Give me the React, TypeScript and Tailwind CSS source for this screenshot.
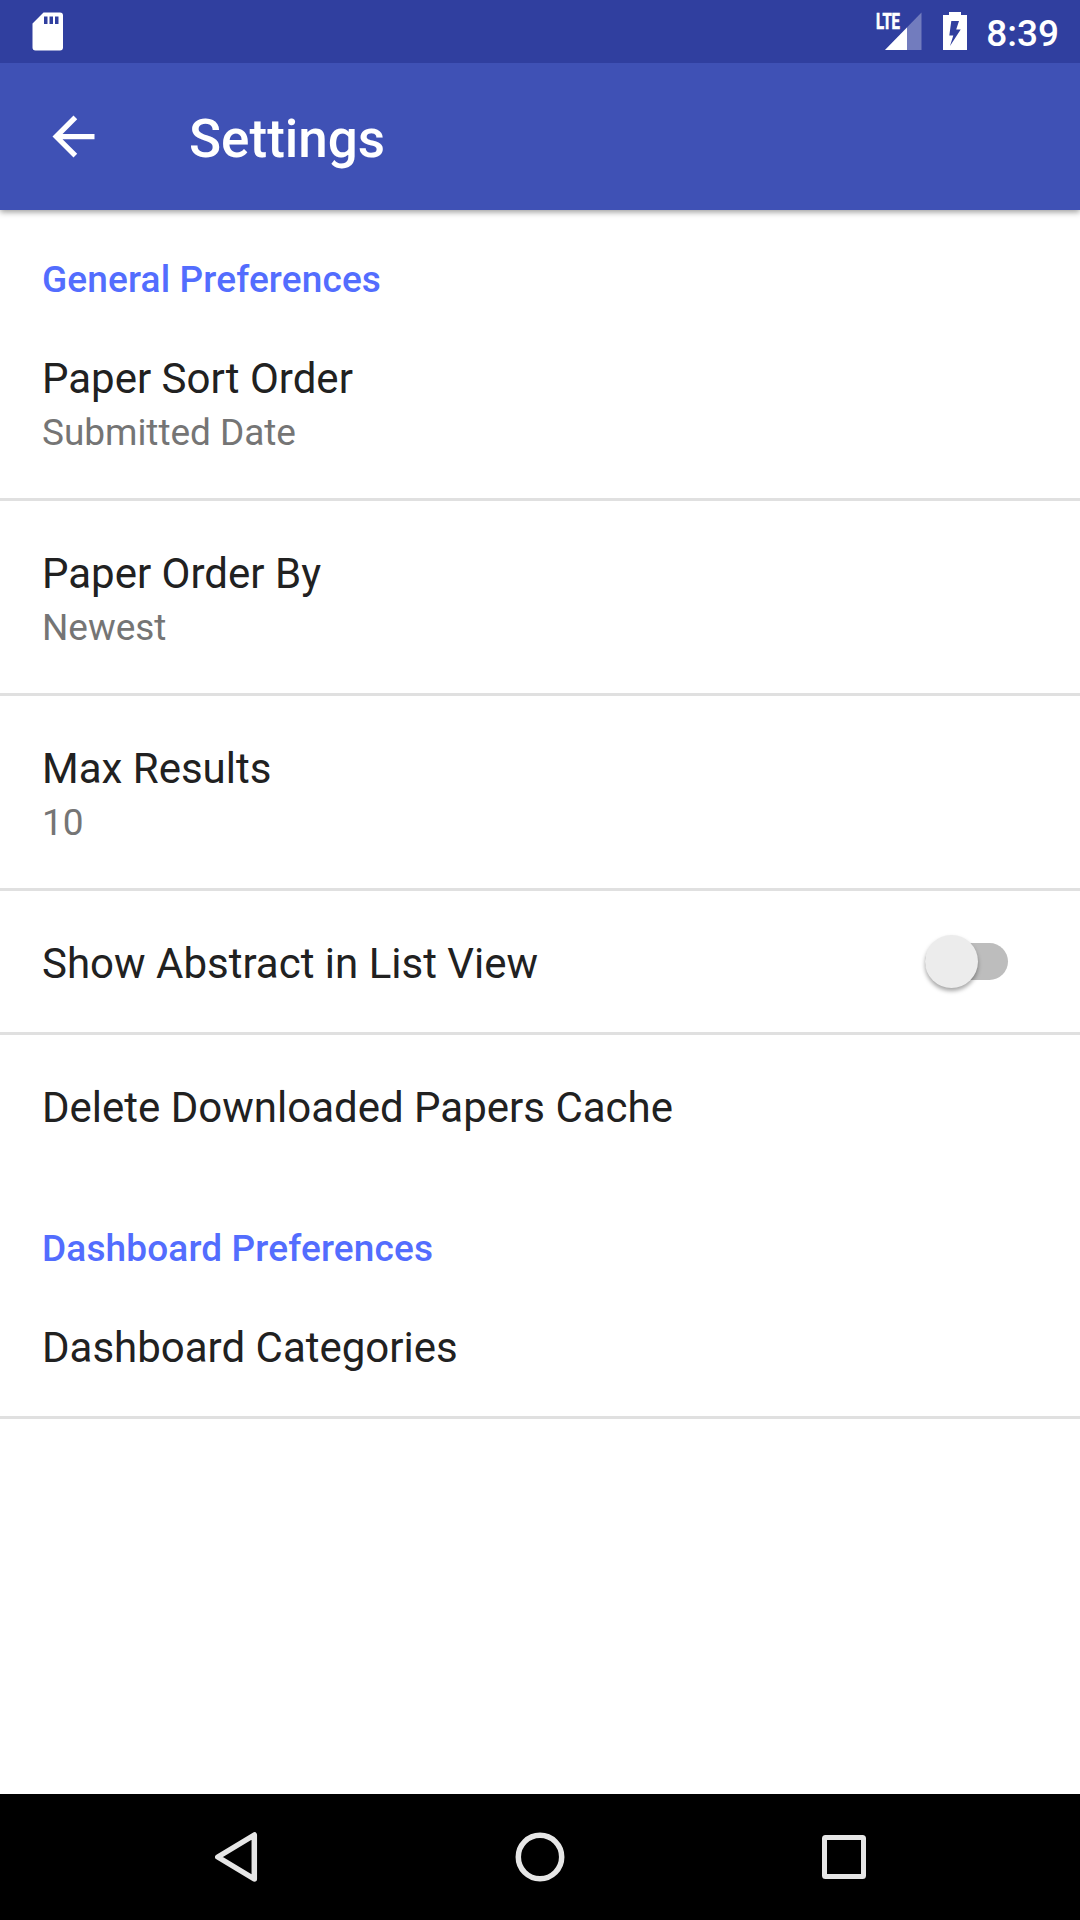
import React from "react";

function StatusBar() {
  return (
    <div className="relative z-10 flex h-[63px] items-center bg-[#303f9f] pl-8 pr-[21px]">
      <svg className="mr-auto h-[63px] w-8" viewBox="32 0 32 63">
        <path
          fillRule="evenodd"
          fill="#fff"
          d="M43.5 12.5H60q3 0 3 3V47.500q0 3-3 3H35.500q-3 0-3-3V23.500zM44 16.500v7.500h3.500v-7.500zM49.500 16.500v7.500h3.500v-7.500zM55 16.500v7.500h3.500v-7.500z"
        />
      </svg>
      <svg className="h-[63px] w-12" viewBox="876 0 48 63">
        <path d="M921.500 12.500V50H885z" fill="#fff" fillOpacity="0.32" />
        <path d="M907 27.500V50H885z" fill="#fff" />
        <text
          x="876"
          y="29.2"
          fill="#fff"
          stroke="#fff"
          strokeWidth="0.7"
          fontFamily="Roboto"
          fontWeight="700"
          fontSize="22.5"
          textLength="24"
          lengthAdjust="spacingAndGlyphs"
        >
          LTE
        </text>
      </svg>
      <svg className="ml-[19px] h-[63px] w-6" viewBox="943 0 24 63">
        <path
          fillRule="evenodd"
          fill="#fff"
          d="M949 12h12v3h6v35h-24V15h6zM951.300 21l-2 14.500h4L950 46 960.700 29.500h-4.500L959 21z"
        />
      </svg>
      <span className="ml-[19px] pt-[5px] text-[37px] font-medium leading-[44px] text-white">8:39</span>
    </div>
  );
}

function AppBar() {
  return (
    <header className="relative flex h-[147px] items-center bg-[#3f51b5] pl-[42px] shadow-[0_2px_6px_rgba(0,0,0,0.4)]">
      <svg className="size-[63px]" viewBox="0 0 24 24" fill="#fff">
        <path d="M20 11H7.830l5.590-5.590L12 4l-8 8 8 8 1.410-1.410L7.830 13H20v-2z" />
      </svg>
      <h1 className="ml-[84px] pt-[4px] text-[53px] font-medium leading-[62px] text-white">Settings</h1>
    </header>
  );
}

function SectionTitle({ children }: { children: React.ReactNode }) {
  return (
    <h2 className="h-24 px-[42px] pt-[45px] text-[37px] font-medium leading-[50px] tracking-[0.14px] text-[#536dfe]">
      {children}
    </h2>
  );
}

type RowProps = { title: string; summary?: string; divider?: boolean; children?: React.ReactNode };

function Row({ title, summary, divider = true, children }: RowProps) {
  return (
    <div
      className={`flex justify-between border-b-[3px] px-[42px] pt-[45px] ${
        summary ? "h-[195px]" : "h-36"
      } ${divider ? "border-[#e0e0e0]" : "border-transparent"}`}
    >
      <div>
        <div className="text-[42px] leading-[56px] text-[#212121]">{title}</div>
        {summary && (
          <div className="text-[37px] leading-[52px] tracking-[-0.05px] text-[#757575]">{summary}</div>
        )}
      </div>
      {children}
    </div>
  );
}

function Switch() {
  return (
    <div className="mr-[30px] mt-[7px] flex h-[37px] w-[83px] items-center rounded-full bg-[#bdbdbd]">
      <div className="size-[53px] shrink-0 rounded-full bg-[#ececec] shadow-[0_3px_4px_rgba(0,0,0,0.35)]" />
    </div>
  );
}

function NavBar() {
  return (
    <nav className="flex h-[126px] items-center justify-between bg-black px-[205px]">
      <svg className="size-[70px]" viewBox="205 1822 70 70" fill="none" stroke="#e6e6e6" strokeWidth="5.5" strokeLinejoin="round">
        <path d="M254.300 1835v44L217.800 1857z" />
      </svg>
      <svg className="size-[70px]" viewBox="505 1822 70 70" fill="none" stroke="#e6e6e6" strokeWidth="5.5">
        <circle cx="540" cy="1857" r="21.7" />
      </svg>
      <svg className="size-[70px]" viewBox="805 1822 70 70" fill="none" stroke="#e6e6e6" strokeWidth="5">
        <rect x="824.500" y="1837.500" width="39" height="39" rx="1" />
      </svg>
    </nav>
  );
}

export default function App() {
  return (
    <div className="flex h-[1920px] w-[1080px] flex-col overflow-hidden bg-white font-['Roboto',sans-serif]">
      <StatusBar />
      <AppBar />
      <main className="flex-1">
        <SectionTitle>General Preferences</SectionTitle>
        <Row title="Paper Sort Order" summary="Submitted Date" />
        <Row title="Paper Order By" summary="Newest" />
        <Row title="Max Results" summary="10" />
        <Row title="Show Abstract in List View">
          <Switch />
        </Row>
        <Row title="Delete Downloaded Papers Cache" divider={false} />
        <SectionTitle>Dashboard Preferences</SectionTitle>
        <Row title="Dashboard Categories" />
      </main>
      <NavBar />
    </div>
  );
}
